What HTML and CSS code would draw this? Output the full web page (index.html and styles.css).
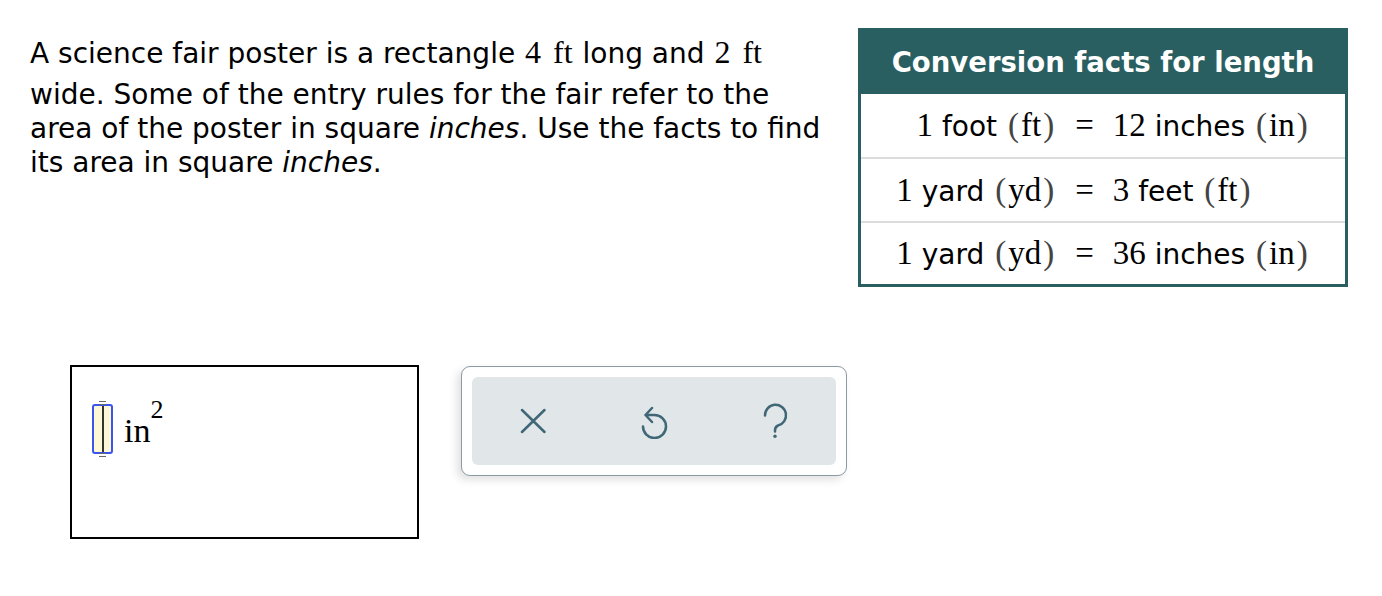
FILE: index.html
```html
<!DOCTYPE html>
<html>
<head>
<meta charset="utf-8">
<link rel="stylesheet" href="styles.css">
</head>
<body>
<div class="page">
  <div class="top">
    <p class="question">A science fair poster is a rectangle <span class="m">4<span class="sp"></span>ft</span> long and <span class="m">2<span class="sp"></span>ft</span> wide. Some of the entry rules for the fair refer to the area of the poster in square <i>inches</i>. Use the facts to find its area in square <i>inches</i>.</p>
    <div class="facts">
      <div class="facts-head">Conversion facts for length</div>
      <table class="facts-table">
        <tr>
          <td class="pad"></td>
          <td class="lhs"><span class="m">1</span> foot <span class="m"><span class="p">(</span>ft<span class="p">)</span></span></td>
          <td class="eq m">=</td>
          <td class="rhs"><span class="m">12</span> inches <span class="m"><span class="p">(</span>in<span class="p">)</span></span></td>
          <td class="pad"></td>
        </tr>
        <tr>
          <td class="pad"></td>
          <td class="lhs"><span class="m">1</span> yard <span class="m"><span class="p">(</span>yd<span class="p">)</span></span></td>
          <td class="eq m">=</td>
          <td class="rhs"><span class="m">3</span> feet <span class="m"><span class="p">(</span>ft<span class="p">)</span></span></td>
          <td class="pad"></td>
        </tr>
        <tr class="last">
          <td class="pad"></td>
          <td class="lhs"><span class="m">1</span> yard <span class="m"><span class="p">(</span>yd<span class="p">)</span></span></td>
          <td class="eq m">=</td>
          <td class="rhs"><span class="m">36</span> inches <span class="m"><span class="p">(</span>in<span class="p">)</span></span></td>
          <td class="pad"></td>
        </tr>
      </table>
    </div>
  </div>
  <div class="bottom">
    <div class="answer">
      <span class="cursor"><span class="cap top"></span><span class="bar"></span><span class="cap bot"></span></span>
      <span class="unit">in<span class="exp">2</span></span>
    </div>
    <div class="tools">
      <div class="tools-inner">
        <span class="slot"><svg viewBox="0 0 26 26" width="26" height="26"><path d="M2 2 L24.5 24 M24.5 2 L2 24" fill="none" stroke="#3f6776" stroke-width="2.5" stroke-linecap="round"/></svg></span>
        <span class="slot"><svg viewBox="0 0 27 35" width="27" height="35"><path d="M2 22.5 A11.5 11.5 0 1 0 13.5 11 H4.5 M11 4 L4.5 11 L11 18" fill="none" stroke="#3f6776" stroke-width="2.5" stroke-linecap="round" stroke-linejoin="round"/></svg></span>
        <span class="slot"><svg viewBox="0 0 25 36" width="25" height="36"><path d="M2 12.5 A10.5 10.5 0 1 1 15 22.5 C12.5 23.5 12 25 12 27.5 V28.5" fill="none" stroke="#3f6776" stroke-width="2.5" stroke-linecap="round"/><circle cx="12" cy="33.3" r="1.7" fill="#3f6776"/></svg></span>
      </div>
    </div>
  </div>
</div>
</body>
</html>
```

FILE: styles.css
```css
* { box-sizing: border-box; }
html, body { margin: 0; padding: 0; background: #fff; }
body { font-family: "DejaVu Sans", Verdana, sans-serif; color: #000; }
.page { padding: 28px 0 0 30px; }
.top { display: flex; align-items: flex-start; }
.question {
  width: 795px;
  margin: 0;
  padding-top: 7px;
  font-size: 28px;
  line-height: 34px;
  flex: none;
}
.m { font-family: "Liberation Serif", "Times New Roman", serif; }
.question .m {
  font-size: 32px;
  display: inline-block;
  line-height: 34px;
  padding-bottom: 9px;
  margin: 0 1px;
}
.sp { display: inline-block; width: 12px; }
.question i { font-style: italic; }
.facts {
  margin-left: 33px;
  width: 490px;
  border: 3px solid #2a5f61;
  flex: none;
}
.facts-head {
  background: #2a5f61;
  color: #fff;
  font-weight: bold;
  font-size: 27.5px;
  height: 63px;
  display: flex;
  align-items: center;
  justify-content: center;
  padding-bottom: 1px;
}
.facts-table {
  width: 100%;
  border-collapse: collapse;
  font-size: 28px;
}
.facts-table td {
  height: 64px;
  border-bottom: 2px solid #dcdcdc;
  padding: 0;
  white-space: nowrap;
  vertical-align: middle;
}
.facts-table tr.last td { border-bottom: 0; height: 62px; }
.facts-table .pad { width: 50%; }
.facts-table .m { font-size: 33px; }
.lhs { text-align: right; }
.rhs { text-align: left; }
.eq { text-align: center; padding: 0 19px !important; }
.p { color: #444; padding: 0 2px; }
.bottom { display: flex; align-items: flex-start; margin-top: 78px; padding-left: 40px; }
.answer {
  width: 349px;
  height: 174px;
  border: 2px solid #000;
  display: flex;
  align-items: flex-start;
  padding: 35px 0 0 20px;
  flex: none;
}
.cursor {
  position: relative;
  width: 21px;
  height: 50px;
  margin-top: 2px;
  background: #fdf7d5;
  border: 2px solid #3a55ee;
  border-radius: 3px;
  display: flex;
  justify-content: center;
  flex: none;
}
.cursor .bar { width: 2px; background: #333; height: 100%; }
.cursor .cap { position: absolute; left: 5px; width: 7px; height: 4px; border-top: 1px solid #666; border-bottom: 1px solid #666; }
.cursor .cap.top { top: -5px; }
.cursor .cap.bot { bottom: -5px; }
.unit {
  font-family: "Liberation Serif", "Times New Roman", serif;
  font-size: 34px;
  line-height: 34px;
  margin-left: 11px;
  margin-top: 12px;
  position: relative;
}
.exp { position: relative; top: -24px; font-size: 26px; margin-left: 0; }
.tools {
  margin-left: 42px;
  margin-top: 1px;
  width: 386px;
  height: 110px;
  border: 1px solid #8a9ba4;
  border-radius: 9px;
  padding: 10px;
  background: #fff;
  box-shadow: -4px 4px 8px rgba(0,0,0,0.12);
  flex: none;
}
.tools-inner {
  height: 100%;
  background: #e1e6e9;
  border-radius: 6px;
  display: flex;
  align-items: center;
  justify-content: center;
}
.slot { width: 121px; display: flex; justify-content: center; align-items: center; }
.slot svg { display: block; }
```
